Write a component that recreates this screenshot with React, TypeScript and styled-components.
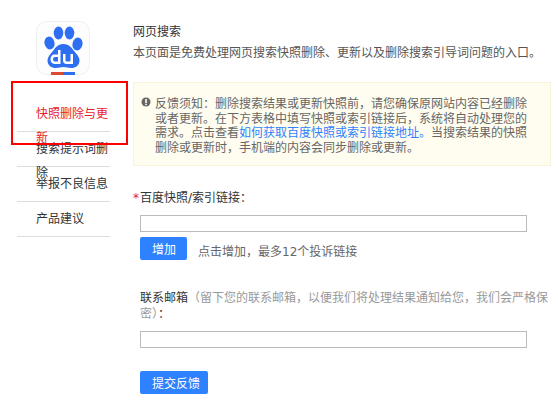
import React from 'react';
import styled, {createGlobalStyle} from 'styled-components';

const GlobalStyle = createGlobalStyle`
	html, body {
		margin: 0;
		padding: 0;
		background: #fff;
	}
	body {
		font-family: "DejaVu Sans", "Noto Sans CJK SC", sans-serif;
		font-size: 12px;
		color: #333;
	}
`;

const Page = styled.div`
	position: relative;
	display: flex;
	width: 558px;
	height: 415px;
	overflow: hidden;
`;

const Sidebar = styled.aside`
	flex: 0 0 133px;
	display: flex;
	flex-direction: column;
	padding: 21px 0 0 17px;
	box-sizing: border-box;
`;

const Logo = styled.svg`
	display: block;
	width: 54px;
	height: 54px;
	margin: 0 0 22px 19px;
`;

const NavList = styled.ul`
	list-style: none;
	margin: 0;
	padding: 0;
	width: 93px;
`;

const NavItem = styled.li<{$active?: boolean}>`
	height: 35px;
	box-sizing: border-box;
	padding: 5px 1px 0 19px;
	line-height: 24px;
	border-bottom: 1px solid #ddd;
	color: ${props => (props.$active ? '#e8232b' : '#333')};
`;

const Highlight = styled.div`
	position: absolute;
	left: 11px;
	top: 81px;
	width: 117px;
	height: 64px;
	box-sizing: border-box;
	border: 2px solid #f00;
`;

const Main = styled.main`
	flex: 1;
	padding: 23px 7px 0 0;
	min-width: 0;
`;

const Title = styled.h1`
	margin: 0;
	font-size: 12px;
	font-weight: 400;
	line-height: 18px;
	color: #333;
`;

const Intro = styled.p`
	margin: 3px 0 0;
	line-height: 18px;
	color: #555;
`;

const Notice = styled.div`
	position: relative;
	margin-top: 20px;
	height: 84px;
	box-sizing: border-box;
	padding: 14px 20px 0 21px;
	background: #fffdf0;
	border: 1px solid #faf3dc;
	line-height: 14.7px;
	color: #666;
`;

const NoticeIcon = styled.svg`
	position: absolute;
	left: 7px;
	top: 14px;
	width: 10px;
	height: 10px;
`;

const NoticeLink = styled.a`
	color: #2e82ff;
	text-decoration: none;
`;

const Form = styled.form`
	margin-top: 24px;
	padding-left: 7px;
`;

const FieldLabel = styled.label`
	position: relative;
	display: block;
	line-height: 16px;
	color: #333;
`;

const Star = styled.span`
	position: absolute;
	left: -7px;
	top: 0;
	color: #e8232b;
`;

const Muted = styled.span`
	color: #999;
`;

const TextInput = styled.input`
	display: block;
	width: 387px;
	height: 17px;
	box-sizing: border-box;
	margin: 9px 0 0;
	padding: 0 4px;
	background: #fff;
	border: 1px solid #bbb;
	border-radius: 0;
	outline: none;
`;

const AddRow = styled.div`
	display: flex;
	align-items: flex-start;
	gap: 11px;
	margin-top: 5px;
`;

const Hint = styled.span`
	padding-top: 6px;
	line-height: 18px;
	color: #666;
`;

const Button = styled.button`
	display: block;
	min-width: 47px;
	height: 23px;
	padding: 0 8px 0 12px;
	font: inherit;
	text-align: left;
	color: #fff;
	background: #2e82ff;
	border: 0;
	border-radius: 2px;
`;

const ContactField = styled.div`
	margin-top: 29px;
`;

const SubmitWrap = styled.div`
	margin-top: 23px;
`;

const BaiduLogo = () => (
	<Logo viewBox="0 0 54 54">
		<rect x="0.5" y="0.5" width="53" height="53" rx="10" fill="#fdfdfe" stroke="#eef0f3" />
		<ellipse cx="13.5" cy="22" rx="5" ry="6.5" fill="#2e6ff2" transform="rotate(-12 13.5 22)" />
		<ellipse cx="22.5" cy="12" rx="4.8" ry="6.5" fill="#2e6ff2" />
		<ellipse cx="33.5" cy="12" rx="4.8" ry="6.5" fill="#2e6ff2" />
		<ellipse cx="41.5" cy="23" rx="5" ry="6.5" fill="#2e6ff2" transform="rotate(12 41.5 23)" />
		<path
			d="M27.500 23c6 0 8 4 11 7.500 3 3.500 5 6 5 9 0 5-4 7.500-8.500 7.500-3 0-5-1-7.500-1s-4.500 1-7.500 1c-4.500 0-8.500-2.500-8.500-7.500 0-3 2-5.500 5-9 3-3.500 5-7.500 10.500-7.500z"
			fill="#2e6ff2"
		/>
		<path
			d="M18.500 33.500H22V29h2.500v14h-6c-2.500 0-4-2-4-4.700s1.500-4.800 4-4.800zM19 36c-1 0-2 .8-2 2.300s1 2.300 2 2.300h3V36z M27 33h2.500v6c0 1 .5 1.500 1.500 1.500h2c1 0 1.500-.5 1.500-1.500v-6H37v10h-6.500c-2 0-3.500-1.500-3.500-3.500z"
			fill="#fff"
			fillRule="evenodd"
		/>
		<rect x="15" y="51" width="12" height="3" fill="#dd4a30" />
		<rect x="27" y="51" width="12" height="3" fill="#2e6ff2" />
	</Logo>
);

const links = ['快照删除与更新', '搜索提示词删除', '举报不良信息', '产品建议'];

export default function App() {
	return (
		<Page>
			<GlobalStyle />
			<Sidebar>
				<BaiduLogo />
				<NavList>
					{links.map((link, index) => (
						<NavItem key={link} $active={index === 0}>
							{link}
						</NavItem>
					))}
				</NavList>
			</Sidebar>
			<Highlight />
			<Main>
				<Title>网页搜索</Title>
				<Intro>本页面是免费处理网页搜索快照删除、更新以及删除搜索引导词问题的入口。</Intro>
				<Notice>
					<NoticeIcon viewBox="0 0 10 10">
						<circle cx="5" cy="5" r="4.500" fill="#666" />
						<rect x="4.200" y="2" width="1.600" height="4" fill="#fffdf0" />
						<rect x="4.200" y="6.800" width="1.600" height="1.400" fill="#fffdf0" />
					</NoticeIcon>
					反馈须知：删除搜索结果或更新快照前，请您确保原网站内容已经删除或者更新。在下方表格中填写快照或索引链接后，系统将自动处理您的需求。点击查看
					<NoticeLink href="#">如何获取百度快照或索引链接地址。</NoticeLink>
					当搜索结果的快照删除或更新时，手机端的内容会同步删除或更新。
				</Notice>
				<Form>
					<FieldLabel>
						<Star>*</Star>
						百度快照/索引链接：
					</FieldLabel>
					<TextInput />
					<AddRow>
						<Button type="button">增加</Button>
						<Hint>点击增加，最多12个投诉链接</Hint>
					</AddRow>
					<ContactField>
						<FieldLabel>
							联系邮箱
							<Muted>（留下您的联系邮箱，以便我们将处理结果通知给您，我们会严格保密）</Muted>：
						</FieldLabel>
						<TextInput />
					</ContactField>
					<SubmitWrap>
						<Button type="button">提交反馈</Button>
					</SubmitWrap>
				</Form>
			</Main>
		</Page>
	);
}
